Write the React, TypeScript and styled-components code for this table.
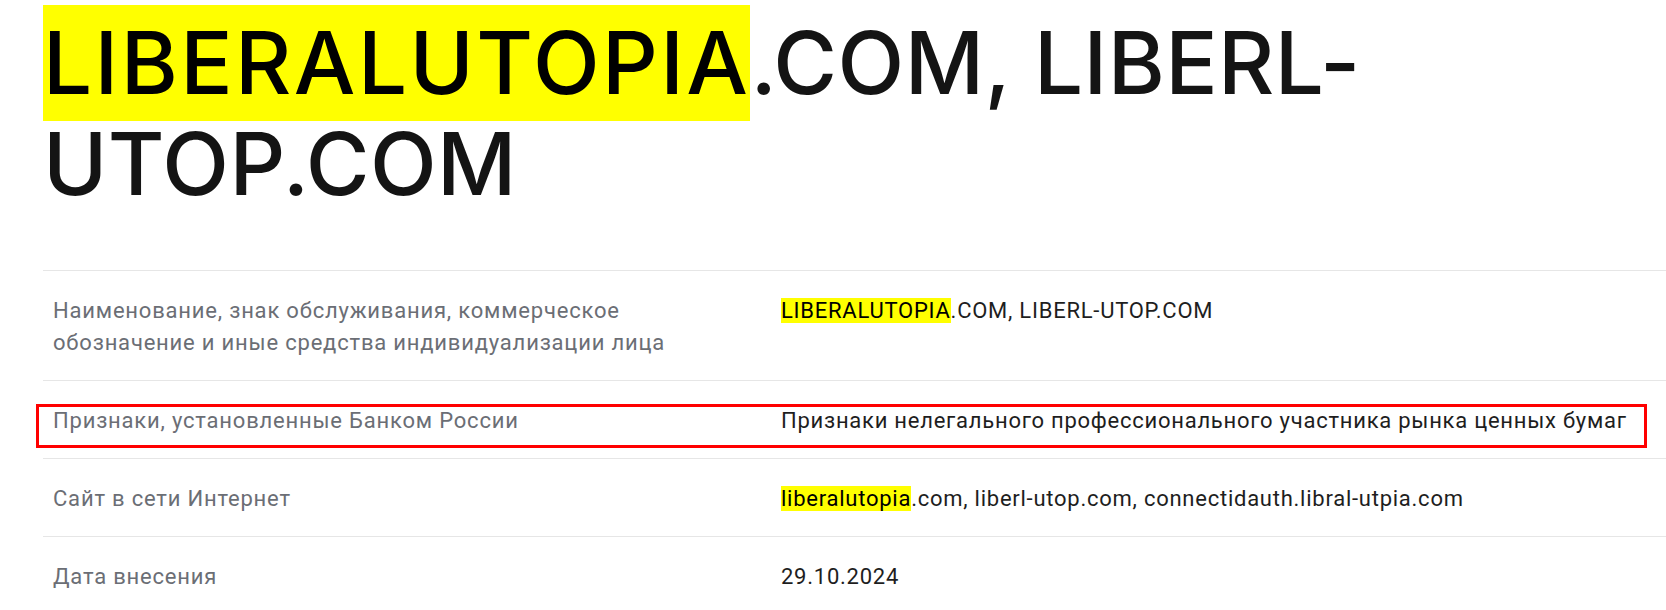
import React from "react";
import styled, { createGlobalStyle } from "styled-components";

const GlobalStyle = createGlobalStyle`
  html, body {
    margin: 0;
    padding: 0;
    background: #ffffff;
  }
  body {
    font-family: Roboto, "Noto Sans", Arial, sans-serif;
    overflow: hidden;
  }
`;

const Page = styled.main`
  padding: 12px 0 0 43px;
`;

const Title = styled.h1`
  margin: 0;
  font-family: Inter, "DejaVu Sans", sans-serif;
  font-weight: 500;
  font-size: 87px;
  line-height: 101px;
  letter-spacing: 0.4px;
  color: #141414;
`;

const Mark = styled.span<{ $big?: boolean }>`
  background: #ffff00;
  color: #000;
  padding: ${(p) => (p.$big ? "5px 0 6px" : "0")};
  letter-spacing: ${(p) => (p.$big ? "2.4px" : "inherit")};
`;

const Table = styled.section`
  margin-top: 56px;
  display: flex;
  flex-direction: column;
`;

const Row = styled.div`
  position: relative;
  display: grid;
  grid-template-columns: 738px 1fr;
  border-top: 1px solid #e6e6e6;
  padding: 24px 0 21px;
`;

const Label = styled.div`
  font-size: 22px;
  line-height: 32px;
  letter-spacing: 0.8px;
  color: #6b6e75;
  padding: 0 100px 0 10px;
`;

const Value = styled.div`
  font-size: 22px;
  line-height: 32px;
  letter-spacing: 0.75px;
  color: #1e1e1e;
`;

const Outline = styled.div`
  position: absolute;
  left: -7px;
  right: 19px;
  top: 23px;
  height: 44px;
  box-sizing: border-box;
  border: 3px solid #ff0000;
  pointer-events: none;
`;

export default function App() {
  return (
    <>
      <GlobalStyle />
      <Page>
        <Title>
          <Mark $big>LIBERALUTOPIA</Mark>.COM, LIBERL-
          <br />
          UTOP.COM
        </Title>
        <Table>
          <Row>
            <Label>
              Наименование, знак обслуживания, коммерческое обозначение и иные средства индивидуализации лица
            </Label>
            <Value>
              <Mark>LIBERALUTOPIA</Mark>.COM, LIBERL-UTOP.COM
            </Value>
          </Row>
          <Row>
            <Label>Признаки, установленные Банком России</Label>
            <Value>Признаки нелегального профессионального участника рынка ценных бумаг</Value>
            <Outline />
          </Row>
          <Row>
            <Label>Сайт в сети Интернет</Label>
            <Value>
              <Mark>liberalutopia</Mark>.com, liberl-utop.com, connectidauth.libral-utpia.com
            </Value>
          </Row>
          <Row>
            <Label>Дата внесения</Label>
            <Value>29.10.2024</Value>
          </Row>
        </Table>
      </Page>
    </>
  );
}
